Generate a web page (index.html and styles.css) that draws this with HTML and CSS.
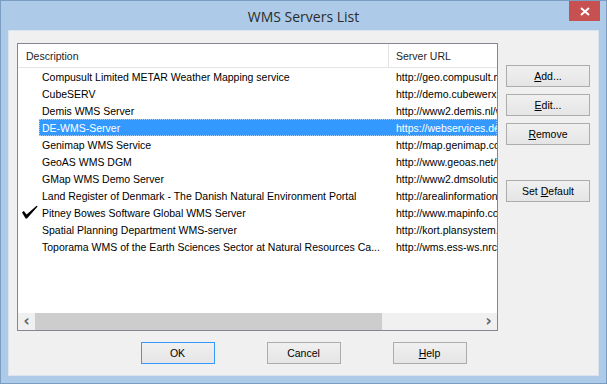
FILE: index.html
```html
<!DOCTYPE html>
<html lang="en">
<head>
    <meta charset="UTF-8">
    <title>WMS Servers List</title>
    <link rel="stylesheet" href="styles.css">
</head>
<body>
<div class="window">
    <!-- title bar -->
    <div class="titlebar">
        <span class="title">WMS Servers List</span>
        <div class="close-btn">
            <svg width="10" height="9" viewBox="0 0 10 9">
                <path d="M1 1 L9 8 M9 1 L1 8" stroke="#fff" stroke-width="2" fill="none"/>
            </svg>
        </div>
    </div>

    <div class="client">
        <div class="main">
            <!-- server list -->
            <div class="listview">
                <div class="lv-header">
                    <div class="h-desc">Description</div>
                    <div class="h-url">Server URL</div>
                </div>
                <div class="lv-body">
                    <div class="row"><div class="check"></div><div class="item"><div class="desc">Compusult Limited METAR Weather Mapping service</div><div class="url">http://geo.compusult.net/wms</div></div></div>
                    <div class="row"><div class="check"></div><div class="item"><div class="desc">CubeSERV</div><div class="url">http://demo.cubewerx.com/demo</div></div></div>
                    <div class="row"><div class="check"></div><div class="item"><div class="desc">Demis WMS Server</div><div class="url">http://www2.demis.nl/wms</div></div></div>
                    <div class="row"><div class="check"></div><div class="item selected"><div class="desc">DE-WMS-Server</div><div class="url">https://webservices.de/wms</div></div></div>
                    <div class="row"><div class="check"></div><div class="item"><div class="desc">Genimap WMS Service</div><div class="url">http://map.genimap.com/wms</div></div></div>
                    <div class="row"><div class="check"></div><div class="item"><div class="desc">GeoAS WMS DGM</div><div class="url">http://www.geoas.net/wms</div></div></div>
                    <div class="row"><div class="check"></div><div class="item"><div class="desc">GMap WMS Demo Server</div><div class="url">http://www2.dmsolutions.ca</div></div></div>
                    <div class="row"><div class="check"></div><div class="item"><div class="desc">Land Register of Denmark - The Danish Natural Environment Portal</div><div class="url">http://arealinformation.dk</div></div></div>
                    <div class="row">
                        <div class="check">
                            <svg width="16" height="15" viewBox="0 0 16 15">
                                <path d="M0 7.5 L1.8 6 L4.6 9.6 L14.6 0.8 L15.6 1.6 L5 13.6 L3.6 13.6 Z" fill="#000"/>
                            </svg>
                        </div>
                        <div class="item"><div class="desc">Pitney Bowes Software Global WMS Server</div><div class="url">http://www.mapinfo.com/wms</div></div>
                    </div>
                    <div class="row"><div class="check"></div><div class="item"><div class="desc">Spatial Planning Department WMS-server</div><div class="url">http://kort.plansystem.dk</div></div></div>
                    <div class="row"><div class="check"></div><div class="item"><div class="desc">Toporama WMS of the Earth Sciences Sector at Natural Resources Ca...</div><div class="url">http://wms.ess-ws.nrcan.gc.ca</div></div></div>
                </div>
                <!-- horizontal scrollbar -->
                <div class="hscroll">
                    <div class="sb-arrow">&lsaquo;</div>
                    <div class="sb-thumb"></div>
                    <div class="sb-track"></div>
                    <div class="sb-arrow">&rsaquo;</div>
                </div>
            </div>

            <!-- side buttons -->
            <div class="side-buttons">
                <button class="btn wide"><u>A</u>dd...</button>
                <button class="btn wide"><u>E</u>dit...</button>
                <button class="btn wide"><u>R</u>emove</button>
                <button class="btn wide set-default">Set <u>D</u>efault</button>
            </div>
        </div>

        <div class="bottom-buttons">
            <button class="btn default">OK</button>
            <button class="btn">Cancel</button>
            <button class="btn"><u>H</u>elp</button>
        </div>
    </div>
</div>
</body>
</html>
```

FILE: styles.css
```css
* {
    box-sizing: border-box;
    margin: 0;
    padding: 0;
}

body {
    font-family: "Liberation Sans", Arial, sans-serif;
    font-size: 10.5px;
    background-color: #fff;
}

.window {
    width: 607px;
    height: 384px;
    border: 1px solid #7c9dc2;
    background-color: #adcbe8;
    display: flex;
    flex-direction: column;
    position: relative;
}

/* title bar */
.titlebar {
    height: 29px;
    display: flex;
    justify-content: center;
    align-items: center;
}

.title {
    font-family: "Open Sans", "Noto Sans", sans-serif;
    font-size: 14px;
    color: #2b2b2b;
    padding-top: 1px;
}

.close-btn {
    position: absolute;
    top: 0;
    right: 6px;
    width: 31px;
    height: 20px;
    background-color: #c75050;
    display: flex;
    justify-content: center;
    align-items: center;
}

.client {
    flex: 1;
    margin: 0 7px 7px 7px;
    background-color: #f0f0f0;
    border: 1px solid #d9e4ef;
    display: flex;
    flex-direction: column;
}

.main {
    display: flex;
    gap: 8px;
    padding: 12px 0 0 8px;
}

/* list view */
.listview {
    width: 481px;
    height: 288px;
    border: 1px solid #828790;
    background-color: #fff;
    display: flex;
    flex-direction: column;
}

.lv-header {
    height: 24px;
    display: flex;
    border-bottom: 1px solid #e5e5e5;
    color: #1e1e1e;
}

.h-desc {
    width: 371px;
    padding-left: 8px;
    border-right: 1px solid #e5e5e5;
    display: flex;
    align-items: center;
}

.h-url {
    flex: 1;
    padding-left: 7px;
    display: flex;
    align-items: center;
    white-space: nowrap;
    overflow: hidden;
}

.lv-body {
    flex: 1;
    overflow: hidden;
}

.row {
    height: 17px;
    display: flex;
}

.check {
    width: 21px;
    flex-shrink: 0;
    padding: 1px 0 0 4px;
}

.item {
    flex: 1;
    display: flex;
    align-items: center;
    overflow: hidden;
    color: #000;
}

.item.selected {
    background-color: #3399ff;
    color: #fff;
    outline: 1px dotted #9fcbf5;
    outline-offset: -1px;
}

.desc {
    width: 350px;
    flex-shrink: 0;
    padding-left: 3px;
    white-space: nowrap;
    overflow: hidden;
}

.url {
    padding-left: 7px;
    white-space: nowrap;
}

/* scrollbar */
.hscroll {
    height: 17px;
    display: flex;
    background-color: #f0f0f0;
}

.sb-arrow {
    width: 17px;
    display: flex;
    justify-content: center;
    align-items: center;
    font-family: "DejaVu Sans", sans-serif;
    font-size: 15px;
    font-weight: bold;
    color: #606060;
    padding-bottom: 2px;
}

.sb-thumb {
    width: 347px;
    background-color: #cdcdcd;
}

.sb-track {
    flex: 1;
}

/* buttons */
.btn {
    width: 74px;
    height: 22px;
    border: 1px solid #acacac;
    background: linear-gradient(#f0f0f0, #e5e5e5);
    font-family: "Liberation Sans", Arial, sans-serif;
    font-size: 10.5px;
    color: #000;
}

.btn.wide {
    width: 84px;
}

.btn.default {
    border-color: #3399ff;
}

.side-buttons {
    display: flex;
    flex-direction: column;
    gap: 7px;
    padding-top: 22px;
}

.set-default {
    margin-top: 28px;
}

.bottom-buttons {
    display: flex;
    justify-content: center;
    gap: 52px;
    padding-top: 11px;
}
```
